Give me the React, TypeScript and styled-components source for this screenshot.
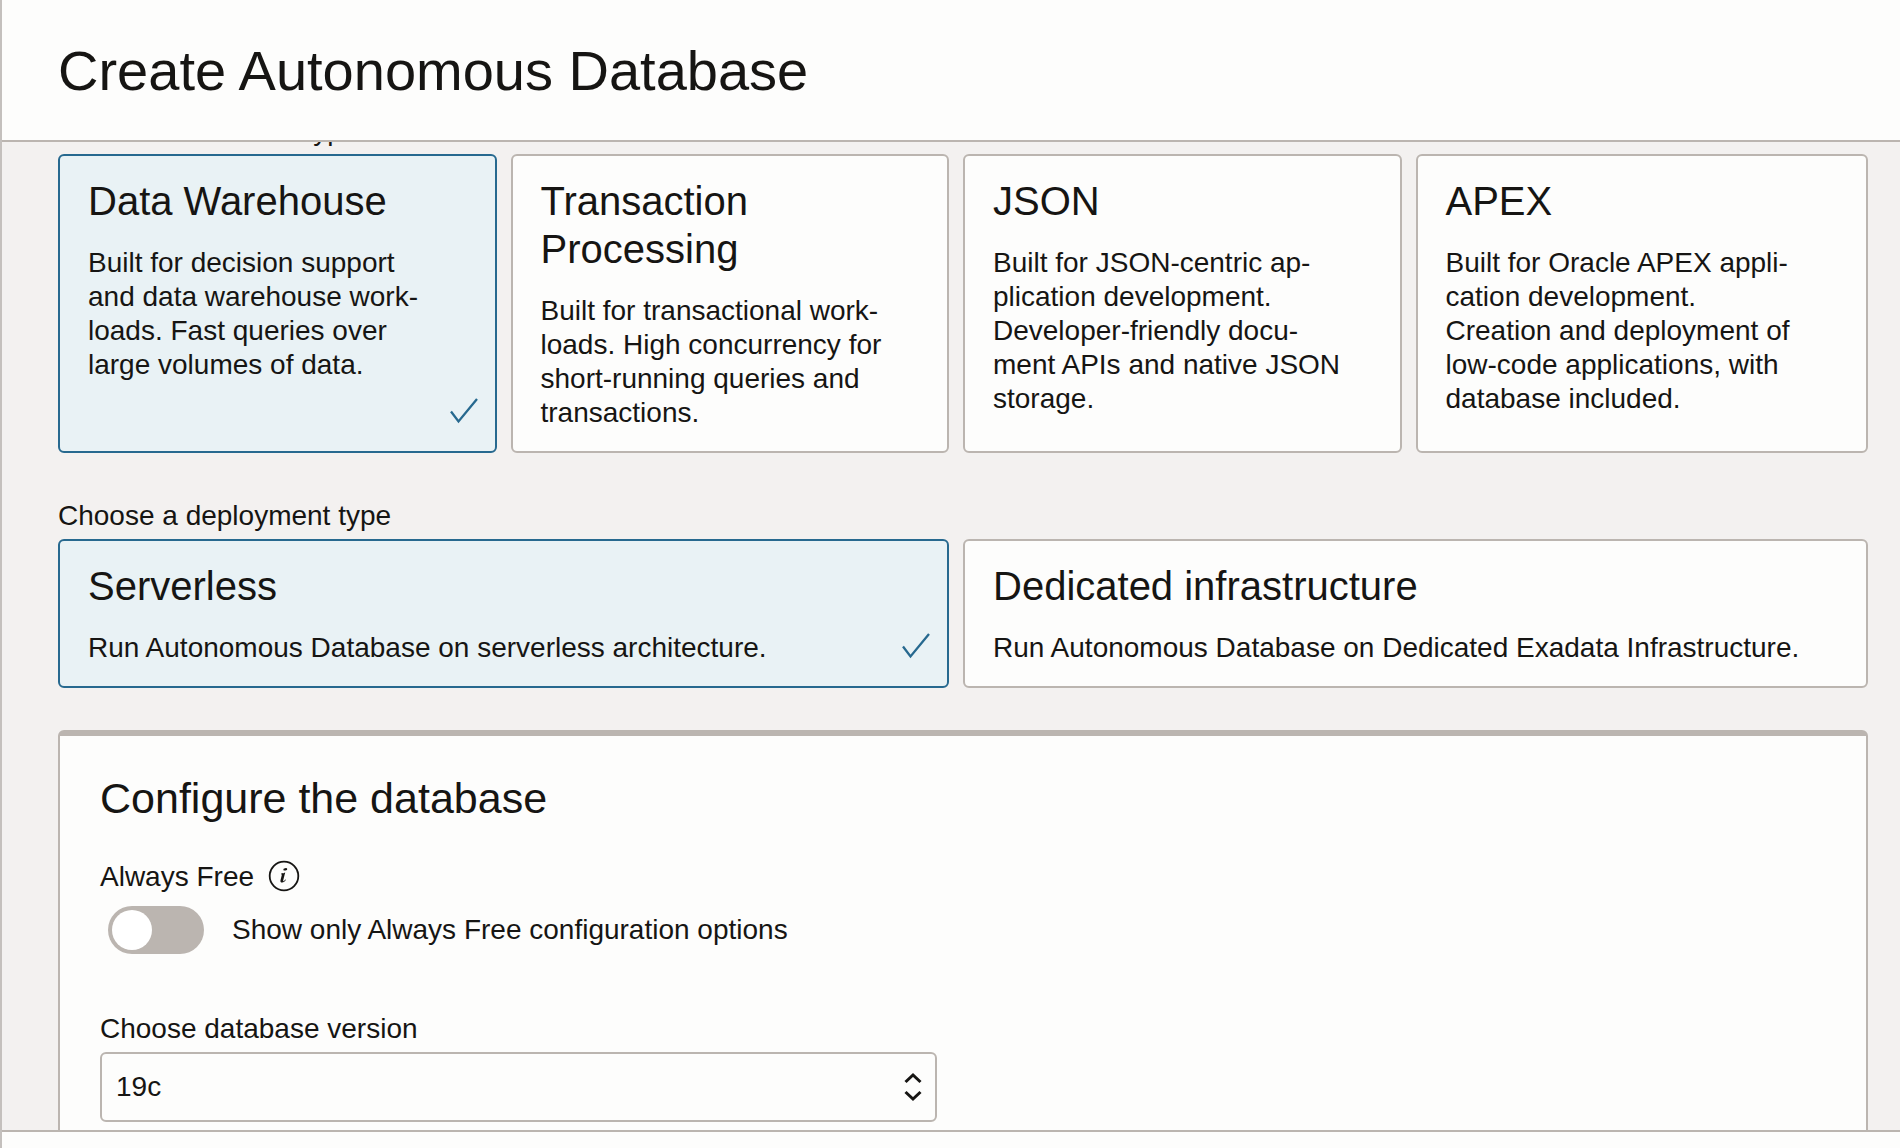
import React, { useLayoutEffect, useRef, useState } from "react";
import styled, { createGlobalStyle } from "styled-components";

const color = {
  ink: "#161513",
  surface: "#fdfdfc",
  canvas: "#f3f1f0",
  line: "#bbb5b0",
  accent: "#27698f",
  accentSoft: "#e9f2f5",
};

const GlobalStyle = createGlobalStyle`
  *, *::before, *::after { box-sizing: border-box; }
  body {
    margin: 0;
    background: ${color.surface};
    color: ${color.ink};
    font-family: "Liberation Sans", Arial, sans-serif;
    font-size: 28px;
    line-height: 34px;
  }
  button, input, select { font: inherit; color: inherit; }
`;

const Drawer = styled.div`
  display: flex;
  flex-direction: column;
  height: 100vh;
  border-left: 2px solid #c4c0bd;
  background: ${color.surface};
`;

const Header = styled.header`
  flex: none;
  padding: 37px 32px 35px 56px;
  border-bottom: 2px solid ${color.line};
`;

const PageTitle = styled.h1`
  margin: 0;
  font-size: 56px;
  line-height: 68px;
  font-weight: 400;
`;

const Scroller = styled.main`
  flex: 1;
  min-height: 0;
  overflow-y: auto;
  scrollbar-width: none;
  padding: 0 32px 80px 56px;
  background: ${color.canvas};
`;

const Footer = styled.footer`
  flex: none;
  height: 18px;
  border-top: 2px solid ${color.line};
`;

const ChoiceGroup = styled.fieldset`
  min-width: 0;
  margin: 0 0 42px;
  padding: 0;
  border: 0;
`;

const GroupLabel = styled.legend`
  padding: 4px 0 0;
  margin-bottom: 6px;
`;

const CardGrid = styled.div<{ $columns: number }>`
  display: grid;
  grid-template-columns: repeat(${(p) => p.$columns}, minmax(0, 1fr));
`;

const Card = styled.label<{ $selected: boolean }>`
  position: relative;
  margin-right: 14px;
  padding: 21px 58px 21px 28px;
  border: 2px solid ${(p) => (p.$selected ? color.accent : color.line)};
  border-radius: 6px;
  background: ${(p) => (p.$selected ? color.accentSoft : color.surface)};
  cursor: pointer;
  hyphens: manual;

  &:last-child {
    margin-right: 0;
  }
`;

const HiddenRadio = styled.input`
  position: absolute;
  width: 1px;
  height: 1px;
  margin: 0;
  opacity: 0;
`;

const CardTitle = styled.span`
  display: block;
  margin-bottom: 21px;
  font-size: 40px;
  line-height: 48px;
`;

const CardText = styled.span`
  display: block;
`;

const CheckMark = styled.svg`
  position: absolute;
  right: 16px;
  bottom: 26px;
  width: 30px;
  height: 28px;
`;

const Panel = styled.section`
  padding: 36px 40px 60px;
  border: 2px solid ${color.line};
  border-top-width: 6px;
  border-radius: 6px;
  background: ${color.surface};
`;

const PanelTitle = styled.h2`
  margin: 0 0 36px;
  font-size: 43px;
  line-height: 52px;
  font-weight: 400;
`;

const FieldHeading = styled.div`
  display: flex;
  align-items: flex-start;
  gap: 14px;
`;

const InfoButton = styled.button`
  display: flex;
  padding: 0;
  border: 0;
  background: none;
`;

const ToggleRow = styled.div`
  display: flex;
  align-items: center;
  gap: 28px;
  margin: 12px 0 58px;
  padding-left: 8px;
`;

const Toggle = styled.input`
  appearance: none;
  flex: none;
  width: 96px;
  height: 48px;
  margin: 0;
  padding: 4px;
  border-radius: 24px;
  background: ${color.line};
  cursor: pointer;

  &::before {
    content: "";
    display: block;
    width: 40px;
    height: 40px;
    border-radius: 50%;
    background: #fff;
  }
  &:checked {
    background: ${color.accent};
  }
  &:checked::before {
    margin-left: auto;
  }
`;

const Field = styled.div`
  width: calc(50% - 26px);
`;

const FieldLabel = styled.label`
  display: block;
  margin-bottom: 6px;
`;

const SelectBox = styled.div`
  display: grid;
  align-items: center;

  > * {
    grid-area: 1 / 1;
  }
`;

const Select = styled.select`
  appearance: none;
  width: 100%;
  height: 70px;
  padding: 0 48px 0 14px;
  border: 2px solid ${color.line};
  border-radius: 6px;
  background: ${color.surface};
`;

const SelectArrows = styled.svg`
  justify-self: end;
  width: 18px;
  height: 30px;
  margin-right: 15px;
  pointer-events: none;
`;

type Option = { id: string; title: string; text: string };

const workloads: Option[] = [
  {
    id: "warehouse",
    title: "Data Warehouse",
    text: "Built for decision support and data warehouse work\u00ADloads. Fast queries over large volumes of data.",
  },
  {
    id: "transaction",
    title: "Transaction Processing",
    text: "Built for transactional work\u00ADloads. High concurrency for short-running queries and transactions.",
  },
  {
    id: "json",
    title: "JSON",
    text: "Built for JSON-centric ap\u00ADplication development. Developer-friendly docu\u00ADment APIs and native JSON storage.",
  },
  {
    id: "apex",
    title: "APEX",
    text: "Built for Oracle APEX appli\u00ADcation development. Creation and deployment of low-code applications, with database included.",
  },
];

const deployments: Option[] = [
  {
    id: "serverless",
    title: "Serverless",
    text: "Run Autonomous Database on serverless architecture.",
  },
  {
    id: "dedicated",
    title: "Dedicated infrastructure",
    text: "Run Autonomous Database on Dedicated Exadata Infrastructure.",
  },
];

function CardChoice({
  name,
  label,
  options,
}: {
  name: string;
  label: string;
  options: Option[];
}) {
  const [value, setValue] = useState(options[0].id);
  return (
    <ChoiceGroup>
      <GroupLabel>{label}</GroupLabel>
      <CardGrid $columns={options.length}>
        {options.map((option) => (
          <Card key={option.id} $selected={option.id === value}>
            <HiddenRadio
              type="radio"
              name={name}
              value={option.id}
              checked={option.id === value}
              onChange={() => setValue(option.id)}
            />
            <CardTitle>{option.title}</CardTitle>
            <CardText>{option.text}</CardText>
            {option.id === value && (
              <CheckMark viewBox="0 0 30 28" fill="none" aria-hidden="true">
                <path d="M2 14.500 9.500 24.500 28 2" stroke={color.accent} strokeWidth="2.300" />
              </CheckMark>
            )}
          </Card>
        ))}
      </CardGrid>
    </ChoiceGroup>
  );
}

export default function App() {
  const scroller = useRef<HTMLElement>(null);
  const [freeOnly, setFreeOnly] = useState(false);

  // Open with the workload cards at the top of the visible area.
  useLayoutEffect(() => {
    if (scroller.current) scroller.current.scrollTop = 32;
  }, []);

  return (
    <>
      <GlobalStyle />
      <Drawer>
        <Header>
          <PageTitle>Create Autonomous Database</PageTitle>
        </Header>
        <Scroller ref={scroller}>
          <CardChoice name="workload" label="Choose a workload type" options={workloads} />
          <CardChoice name="deployment" label="Choose a deployment type" options={deployments} />
          <Panel>
            <PanelTitle>Configure the database</PanelTitle>
            <FieldHeading>
              <span>Always Free</span>
              <InfoButton type="button" aria-label="About Always Free">
                <svg width="32" height="32" viewBox="0 0 32 32" fill="none">
                  <circle cx="16" cy="16" r="14.3" stroke={color.ink} strokeWidth="1.8" />
                  <path
                    d="M13.2 13.400c1.700-.1 3.100-.5 4-1l-2 7.900c-.2.900.1 1.100.6.700.5-.3 1-.9 1.500-1.600l.6.4c-1 1.700-2.300 2.800-3.800 2.800-1.400 0-1.900-.9-1.600-2.300l1.300-5.200c.1-.7-.1-.8-.8-.8z"
                    fill={color.ink}
                  />
                  <ellipse cx="17.300" cy="9.300" rx="2" ry="1.200" fill={color.ink} transform="rotate(-12 17.300 9.300)" />
                </svg>
              </InfoButton>
            </FieldHeading>
            <ToggleRow>
              <Toggle
                id="free-only"
                type="checkbox"
                role="switch"
                checked={freeOnly}
                onChange={(e) => setFreeOnly(e.target.checked)}
              />
              <label htmlFor="free-only">Show only Always Free configuration options</label>
            </ToggleRow>
            <Field>
              <FieldLabel htmlFor="db-version">Choose database version</FieldLabel>
              <SelectBox>
                <Select id="db-version" defaultValue="19c">
                  <option value="19c">19c</option>
                </Select>
                <SelectArrows viewBox="0 0 18 30" fill="none" aria-hidden="true">
                  <path
                    d="M1.500 10 9 3l7.500 7M1.500 20 9 27l7.500-7"
                    stroke={color.ink}
                    strokeWidth="3"
                  />
                </SelectArrows>
              </SelectBox>
            </Field>
          </Panel>
        </Scroller>
        <Footer />
      </Drawer>
    </>
  );
}
